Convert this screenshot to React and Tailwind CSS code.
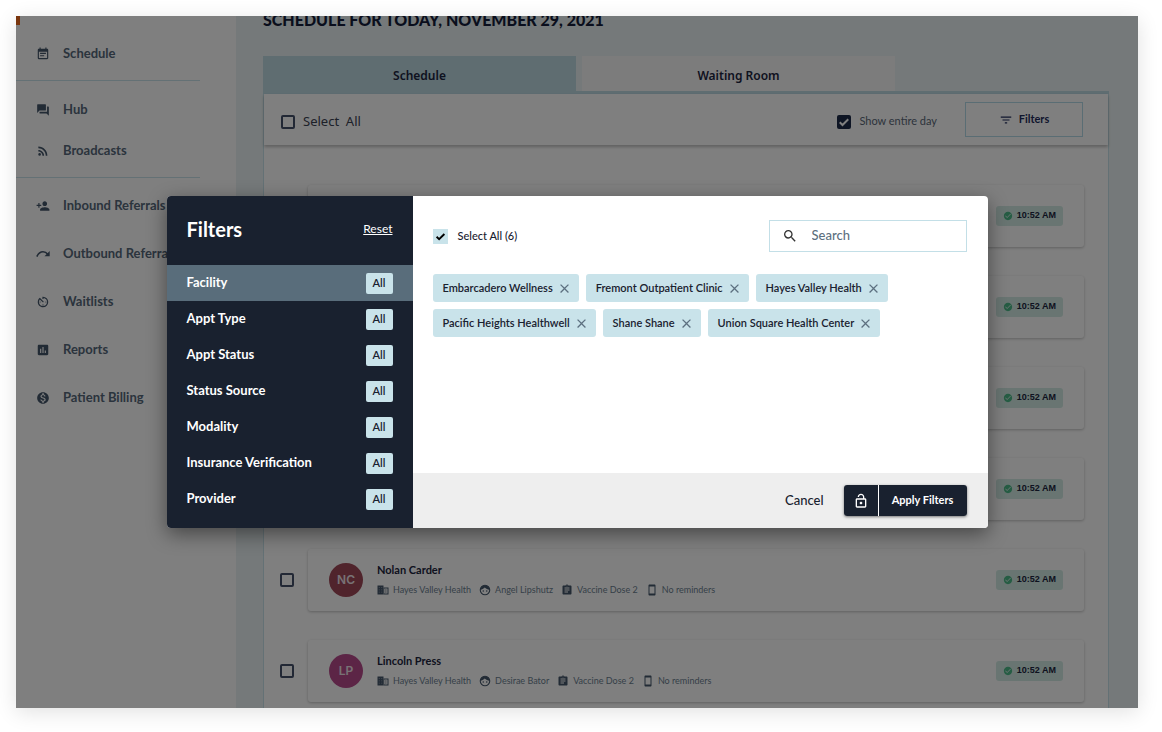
import React from "react";
import {
  MdEventNote, MdForum, MdRssFeed, MdPersonAdd, MdAvTimer, MdAssessment,
  MdMonetizationOn, MdFilterList, MdCheckCircle,
  MdAssignment, MdSmartphone, MdSearch, MdOutlineLockOpen, MdClose,
} from "react-icons/md";

const primaryNav = [
  { label: "Hub", Icon: MdForum },
  { label: "Broadcasts", Icon: MdRssFeed },
];

function ForwardArc({ className }) {
  return (
    <svg viewBox="0 0 24 24" className={className} fill="none" stroke="currentColor" strokeWidth="2.6" aria-hidden="true">
      <path d="M1.5 16.5C4 10.500 8 8 12 8c3.500 0 6 1.500 8 4.500" />
      <path d="M23.500 7v9h-9z" fill="currentColor" stroke="none" />
    </svg>
  );
}

function Check({ className }) {
  return (
    <svg viewBox="0 0 24 24" className={className} fill="none" stroke="currentColor" strokeWidth="4" aria-hidden="true">
      <path d="M3.500 12.500l5.500 5.500L20.500 6.500" />
    </svg>
  );
}

function Building({ className }) {
  return (
    <svg viewBox="0 0 24 24" className={className} fill="currentColor" aria-hidden="true">
      <path d="M1 3h12v18H1z" />
      <path d="M13 7h10v14H13zM14.500 9v10H21V9z" fillRule="evenodd" />
      <path d="M16.500 11h2.500v2h-2.500zM16.500 15h2.500v2h-2.500z" />
      <path d="M3.500 6.500h2v1.500h-2zM8.500 6.500h2v1.500h-2zM3.500 11h2v1.500h-2zM8.500 11h2v1.500h-2zM3.500 15.500h2V17h-2zM8.500 15.500h2V17h-2z" fill="#fff" opacity="0.5" />
    </svg>
  );
}

function Face({ className }) {
  return (
    <svg viewBox="0 0 24 24" className={className} aria-hidden="true">
      <circle cx="12" cy="12" r="9.500" fill="none" stroke="currentColor" strokeWidth="2.200" />
      <path d="M2.500 12C3 5.500 7 2.500 12 2.500S21 5.500 21.500 12C17 11 14 9.500 11.500 7 9 9.500 6 11.200 2.500 12z" fill="currentColor" />
      <circle cx="8.500" cy="14" r="1.500" fill="currentColor" />
      <circle cx="15.500" cy="14" r="1.500" fill="currentColor" />
    </svg>
  );
}

const secondaryNav = [
  { label: "Inbound Referrals", Icon: MdPersonAdd },
  { label: "Outbound Referrals", Icon: ForwardArc },
  { label: "Waitlists", Icon: MdAvTimer },
  { label: "Reports", Icon: MdAssessment },
  { label: "Patient Billing", Icon: MdMonetizationOn },
];

const appointments = [
  { time: "10:52 AM" },
  { time: "10:52 AM" },
  { time: "10:52 AM" },
  { time: "10:52 AM" },
  { time: "10:52 AM", initials: "NC", name: "Nolan Carder", provider: "Angel Lipshutz", color: "bg-[#a04858]" },
  { time: "10:52 AM", initials: "LP", name: "Lincoln Press", provider: "Desirae Bator", color: "bg-[#b84a8c]" },
];

const categories = ["Facility", "Appt Type", "Appt Status", "Status Source", "Modality", "Insurance Verification", "Provider"];

const facilities = [
  "Embarcadero Wellness",
  "Fremont Outpatient Clinic",
  "Hayes Valley Health",
  "Pacific Heights Healthwell",
  "Shane Shane",
  "Union Square Health Center",
];

function NavItem({ label, Icon, height }) {
  return (
    <a href="#" className={`flex items-center gap-[13px] pl-5 text-[13px] font-bold text-[#56687a] ${height}`}>
      <Icon className="size-[14px] shrink-0 text-[#44566a]" />
      <span className="whitespace-nowrap">{label}</span>
    </a>
  );
}

function Sidebar() {
  return (
    <nav className="flex w-[220px] shrink-0 flex-col bg-white shadow-[1px_0_3px_rgba(0,0,0,0.25)]">
      <div className="h-[9px] w-1 bg-[#f26a1b]" />
      <div className="mt-[5px]">
        <NavItem label="Schedule" Icon={MdEventNote} height="h-12" />
      </div>
      <hr className="mt-[2px] mr-9 border-[#c9e3ea]" />
      <div className="mt-2">
        {primaryNav.map((item) => (
          <NavItem key={item.label} {...item} height="h-[41px]" />
        ))}
      </div>
      <hr className="mt-[6px] mr-9 border-[#c9e3ea]" />
      <div className="mt-1">
        {secondaryNav.map((item) => (
          <NavItem key={item.label} {...item} height="h-12" />
        ))}
      </div>
    </nav>
  );
}

function Detail({ Icon, children }) {
  return (
    <span className="flex items-center gap-1">
      <Icon className="size-3 text-[#44566a]" />
      {children}
    </span>
  );
}

function Appointment({ time, initials, name, provider, color }) {
  return (
    <li className="flex items-center gap-[14px]">
      <input
        type="checkbox"
        aria-label={name ? `Select ${name}` : "Select appointment"}
        className="size-[14px] shrink-0 appearance-none rounded-[2px] border-2 border-[#44506a]"
      />
      <article className="flex h-[62px] grow items-center rounded-[3px] bg-white pr-[21px] pl-[21px] shadow-[0_1px_3px_rgba(0,0,0,0.25)]">
        {name && (
          <>
            <span className={`flex size-[34px] items-center justify-center rounded-full font-['Inter'] text-xs font-semibold text-[#f0e4ea] ${color}`}>
              {initials}
            </span>
            <div className="ml-[14px]">
              <h2 className="text-[11px] leading-4 font-bold text-[#1c2540]">{name}</h2>
              <p className="mt-1 flex items-center gap-2 text-[9px] leading-4 text-[#6c7f90]">
                <Detail Icon={Building}>Hayes Valley Health</Detail>
                <Detail Icon={Face}>{provider}</Detail>
                <Detail Icon={MdAssignment}>Vaccine Dose 2</Detail>
                <Detail Icon={MdSmartphone}>No reminders</Detail>
              </p>
            </div>
          </>
        )}
        <time className="ml-auto flex h-5 items-center gap-1 rounded-[3px] bg-[#d2ebe4] px-[7px] font-['Liberation_Sans'] text-[9px] font-bold text-[#1c2540]">
          <MdCheckCircle className="size-[10px] text-[#4cba88]" />
          {time}
        </time>
      </article>
    </li>
  );
}

function SchedulePage() {
  return (
    <main className="flex min-w-0 grow flex-col bg-[#ebf3f4] pr-[29px] pl-[27px]">
      <h1 className="-mt-2 mb-6 text-base leading-6 font-black text-[#141d3a] uppercase">
        Schedule for today, November 29, 2021
      </h1>
      <div role="tablist" className="flex shrink-0 gap-[6px] border-b-[3px] border-[#bedae3] font-['Noto_Sans'] text-xs font-semibold text-[#1c2540]">
        <button role="tab" aria-selected="true" className="h-[35px] w-[37%] bg-[#bedae3] pt-1">Schedule</button>
        <button role="tab" aria-selected="false" className="h-[35px] w-[37%] bg-[#f9f9f9] pt-1">Waiting Room</button>
      </div>
      <section className="grow border-x border-[#c9e3ea] bg-white">
        <div className="flex h-[51px] items-center bg-white pr-[25px] pl-[17px] shadow-[0_2px_3px_rgba(0,0,0,0.25)]">
          <label className="flex items-center gap-2 pt-1 font-['Noto_Sans'] text-[13px] whitespace-pre text-[#3a4252]">
            <input type="checkbox" className="size-[14px] appearance-none rounded-[2px] border-2 border-[#44506a]" />
            {"Select  All"}
          </label>
          <label className="ml-auto flex items-center gap-2 pt-1 text-[11px] text-[#5a6878]">
            <span className="grid place-items-center">
              <input type="checkbox" defaultChecked className="col-start-1 row-start-1 size-[14px] appearance-none rounded-[2px] bg-[#1c2a48]" />
              <Check className="pointer-events-none col-start-1 row-start-1 size-3 text-white" />
            </span>
            Show entire day
          </label>
          <button className="ml-7 flex h-[35px] w-[118px] items-center justify-center gap-[6px] border border-[#b4dbe8] bg-white text-[11px] font-bold text-[#1f2d5c]">
            <MdFilterList className="size-[14px]" />
            Filters
          </button>
        </div>
        <ul className="mt-10 flex flex-col gap-[29px] pr-6 pl-4">
          {appointments.map((appointment, index) => (
            <Appointment key={index} {...appointment} />
          ))}
        </ul>
      </section>
    </main>
  );
}

function FilterDialog() {
  return (
    <div role="dialog" aria-label="Filters" className="flex w-[821px] max-w-full overflow-hidden rounded bg-white shadow-[0_6px_20px_rgba(0,0,0,0.45)]">
      <div className="w-[246px] shrink-0 bg-[#19212f] pb-[11px] text-white">
        <div className="flex h-[69px] items-center justify-between px-5 pb-1">
          <h2 className="text-[20px] leading-6 font-bold">Filters</h2>
          <button className="text-xs underline">Reset</button>
        </div>
        {categories.map((category, index) => (
          <button
            key={category}
            className={`flex h-9 w-full items-center justify-between px-5 text-[13px] font-bold ${index === 0 ? "bg-[#596d7b]" : ""}`}
          >
            {category}
            <span className="flex h-[21px] w-[27px] items-center justify-center rounded-[2px] bg-[#c9e3ea] text-[11px] font-semibold text-[#19212f]">All</span>
          </button>
        ))}
      </div>
      <div className="flex min-w-0 grow flex-col">
        <div className="flex grow flex-col pt-6 pr-[21px] pl-5">
          <div className="flex items-center justify-between">
            <label className="flex items-center gap-[10px] text-[11px] font-medium text-[#19212f]">
              <span className="grid place-items-center">
                <input type="checkbox" defaultChecked className="col-start-1 row-start-1 size-[15px] appearance-none bg-[#c9e3ea]" />
                <Check className="pointer-events-none col-start-1 row-start-1 size-[11px] text-black" />
              </span>
              Select All (6)
            </label>
            <label className="flex h-8 w-[198px] items-center gap-[14px] border border-[#c3dfe7] px-3">
              <MdSearch className="size-4 shrink-0 text-[#333]" />
              <input type="search" aria-label="Search" placeholder="Search" className="w-full min-w-0 text-[13px] font-medium outline-none placeholder:text-[#5d7080]" />
            </label>
          </div>
          <ul className="mt-[22px] flex flex-wrap gap-[7px]">
            {facilities.map((facility) => (
              <li key={facility} className="flex h-7 items-center gap-1 rounded-[3px] bg-[#c9e3ea] pr-[7px] pl-[10px] text-[11px] font-semibold text-[#19212f]">
                {facility}
                <button aria-label={`Remove ${facility}`}>
                  <MdClose className="size-[15px] text-[#5d7080]" />
                </button>
              </li>
            ))}
          </ul>
        </div>
        <div className="flex h-[55px] items-center justify-end bg-[#eeeeee] pr-[21px]">
          <button className="mr-5 text-[13px] font-medium text-[#19212f]">Cancel</button>
          <div className="flex h-[31px] gap-px rounded-[3px] bg-white shadow-[0_1px_3px_rgba(0,0,0,0.5)]">
            <button aria-label="Lock filters" className="flex w-[34px] items-center justify-center rounded-l-[3px] bg-[#19212f] text-white">
              <MdOutlineLockOpen className="size-4" />
            </button>
            <button className="w-[88px] rounded-r-[3px] bg-[#19212f] text-[11px] font-bold text-white">Apply Filters</button>
          </div>
        </div>
      </div>
    </div>
  );
}

export default function App() {
  return (
    <div className="h-screen bg-white pt-4 pr-6 pb-6 pl-4 font-['Lato',sans-serif]">
      <div className="relative flex h-full overflow-hidden shadow-[0_4px_20px_rgba(0,0,0,0.12)]">
        <Sidebar />
        <SchedulePage />
        <div className="absolute inset-0 grid place-items-center bg-black/50">
          <FilterDialog />
        </div>
      </div>
    </div>
  );
}
